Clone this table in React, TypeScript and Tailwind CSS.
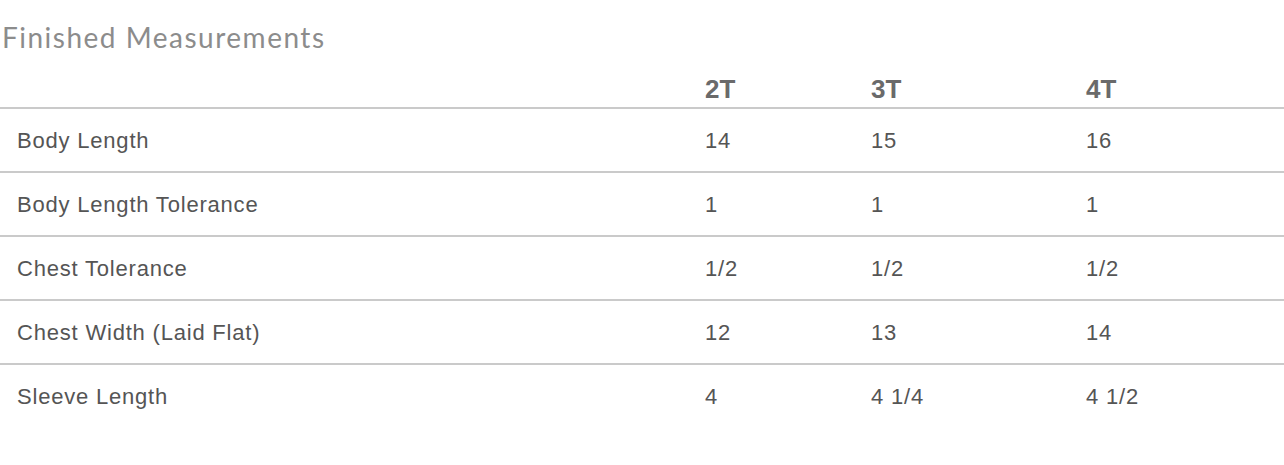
const sizes = ['2T', '3T', '4T'];

const rows: { label: string; values: string[] }[] = [
  { label: 'Body Length', values: ['14', '15', '16'] },
  { label: 'Body Length Tolerance', values: ['1', '1', '1'] },
  { label: 'Chest Tolerance', values: ['1/2', '1/2', '1/2'] },
  { label: 'Chest Width (Laid Flat)', values: ['12', '13', '14'] },
  { label: 'Sleeve Length', values: ['4', '4 1/4', '4 1/2'] },
];

const cols = 'grid grid-cols-[688px_166px_215px_1fr]';

export default function App() {
  return (
    <div className="w-[1284px] h-[465px] bg-white overflow-hidden">
      {/* title */}
      <h2 className="pt-[21px] pl-[2px] text-[28px] leading-[32px] tracking-[1.5px] font-normal text-[#8c8c8c] font-['Lato','Open_Sans',sans-serif]">
        Finished Measurements
      </h2>

      {/* size header */}
      <div className={`${cols} h-[54px] items-end pb-[4px] font-['Liberation_Sans',Arial,sans-serif] text-[26px] leading-[28px] font-bold text-[#6a6a6a]`}>
        <div />
        {sizes.map((s) => (
          <div key={s} className="pl-[17px]">{s}</div>
        ))}
      </div>

      {/* rows */}
      {rows.map((r) => (
        <div
          key={r.label}
          className={`${cols} h-[64px] items-center border-t-2 border-[#cacaca] font-['Liberation_Sans',Arial,sans-serif] text-[22px] tracking-[0.8px] text-[#555555]`}
        >
          <div className="pl-[17px]">{r.label}</div>
          {r.values.map((v, i) => (
            <div key={i} className="pl-[17px]">{v}</div>
          ))}
        </div>
      ))}
    </div>
  );
}
